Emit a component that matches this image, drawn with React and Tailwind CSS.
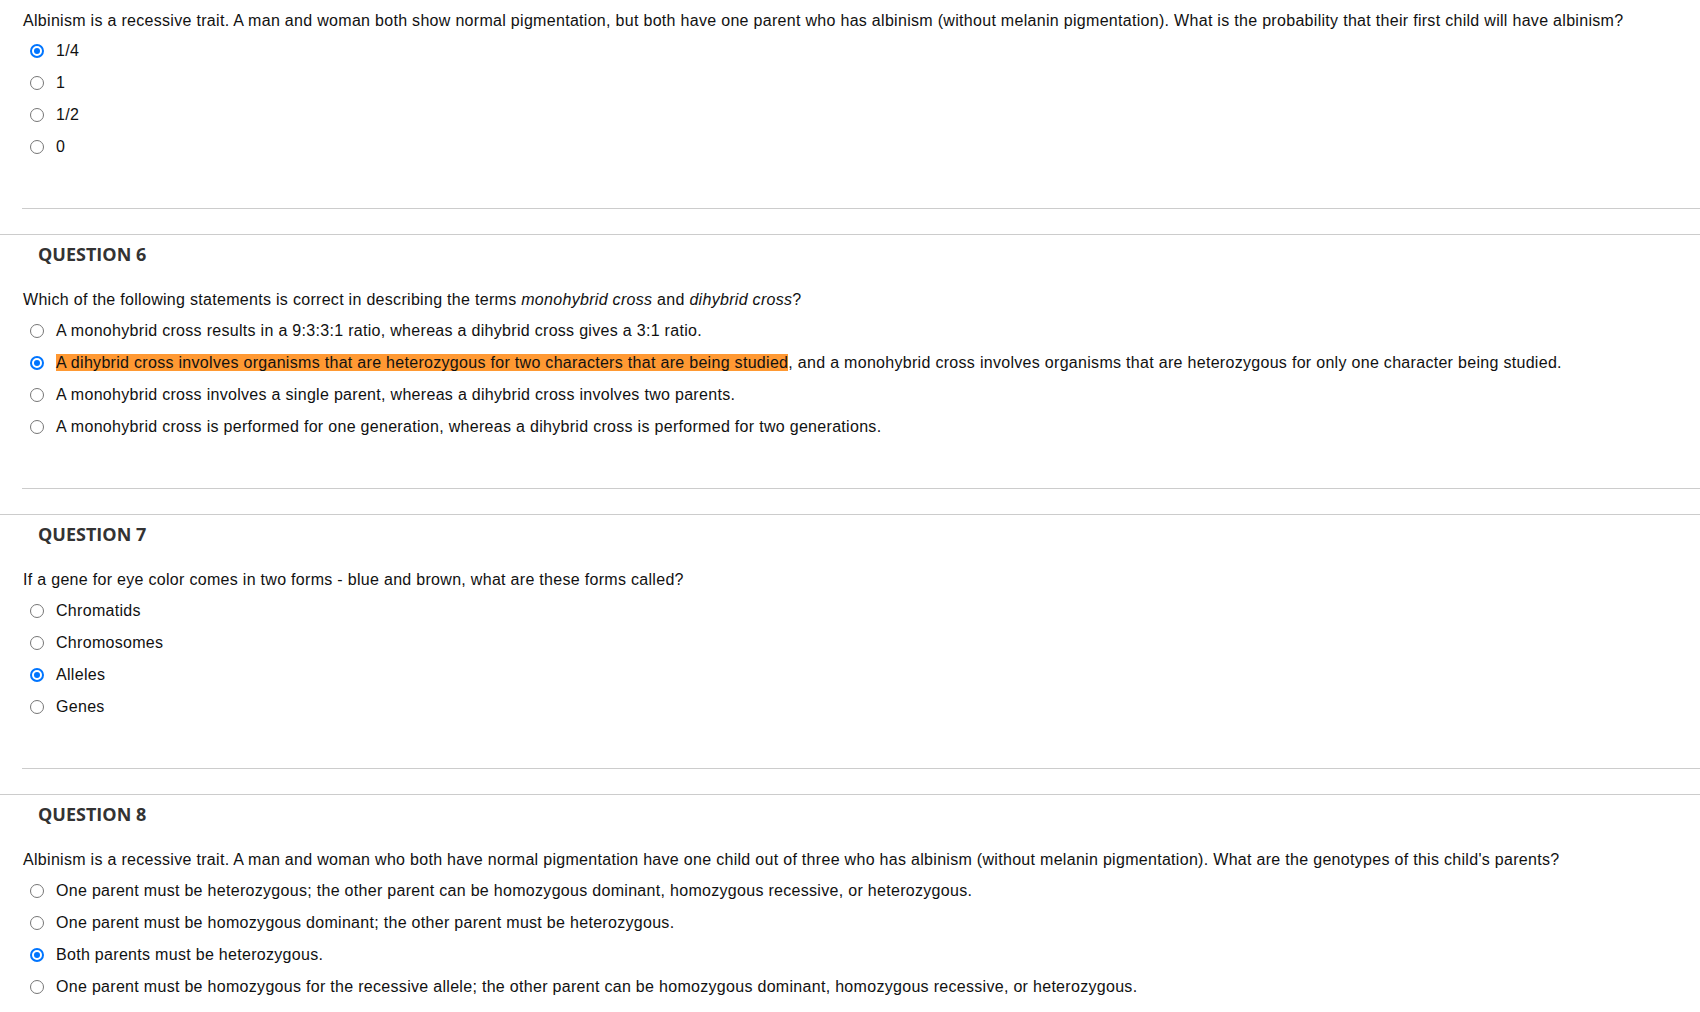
import React from 'react';

const questions = [
  {
    num: 6,
    text: (
      <>
        Which of the following statements is correct in describing the terms <i>monohybrid cross</i> and{' '}
        <i>dihybrid cross</i>?
      </>
    ),
    options: [
      'A monohybrid cross results in a 9:3:3:1 ratio, whereas a dihybrid cross gives a 3:1 ratio.',
      <>
        <span className="bg-[#ff9933]">
          A dihybrid cross involves organisms that are heterozygous for two characters that are being studied
        </span>
        , and a monohybrid cross involves organisms that are heterozygous for only one character being studied.
      </>,
      'A monohybrid cross involves a single parent, whereas a dihybrid cross involves two parents.',
      'A monohybrid cross is performed for one generation, whereas a dihybrid cross is performed for two generations.',
    ],
    answer: 1,
  },
  {
    num: 7,
    text: 'If a gene for eye color comes in two forms - blue and brown, what are these forms called?',
    options: ['Chromatids', 'Chromosomes', 'Alleles', 'Genes'],
    answer: 2,
  },
  {
    num: 8,
    text: "Albinism is a recessive trait. A man and woman who both have normal pigmentation have one child out of three who has albinism (without melanin pigmentation). What are the genotypes of this child's parents?",
    options: [
      'One parent must be heterozygous; the other parent can be homozygous dominant, homozygous recessive, or heterozygous.',
      'One parent must be homozygous dominant; the other parent must be heterozygous.',
      'Both parents must be heterozygous.',
      'One parent must be homozygous for the recessive allele; the other parent can be homozygous dominant, homozygous recessive, or heterozygous.',
    ],
    answer: 2,
  },
];

function Radio({ checked }) {
  if (checked) {
    return (
      <span className="w-[14px] h-[14px] shrink-0 rounded-full border-2 border-[#0075ff] bg-white flex items-center justify-center">
        <span className="w-[6px] h-[6px] rounded-full bg-[#0075ff]" />
      </span>
    );
  }
  return <span className="w-[14px] h-[14px] shrink-0 rounded-full border border-[#767676] bg-white" />;
}

function Options({ options, answer }) {
  return (
    <div className="flex flex-col">
      {options.map((opt, i) => (
        <div key={i} className="h-[32px] flex items-center pl-[7px]">
          <Radio checked={i === answer} />
          <span className="ml-[12px]">{opt}</span>
        </div>
      ))}
    </div>
  );
}

function App() {
  return (
    <div className="w-full min-h-screen bg-white text-[16px] leading-[24px] tracking-[0.3px] text-[#111] font-['Liberation_Sans',Arial,sans-serif]">
      <div className="pt-[9px] px-[23px]">
        <p>
          Albinism is a recessive trait. A man and woman both show normal pigmentation, but both have one parent who
          has albinism (without melanin pigmentation). What is the probability that their first child will have
          albinism?
        </p>
        <div className="mt-[2px]">
          <Options options={['1/4', '1', '1/2', '0']} answer={0} />
        </div>
      </div>
      <div className="mt-[45px] ml-[22px] border-t border-[#cccccc]" />

      {questions.map((q) => (
        <section key={q.num} className="mt-[25px] border-t border-[#cccccc]">
          <h3 className="mt-[7px] pl-[38px] font-['Open_Sans',sans-serif] font-bold text-[18px] leading-[24px] tracking-normal text-[#333]">
            QUESTION {q.num}
          </h3>
          <div className="mt-[22px] px-[23px]">
            <p>{q.text}</p>
            <div className="mt-[3px]">
              <Options options={q.options} answer={q.answer} />
            </div>
          </div>
          <div className="mt-[45px] ml-[22px] border-t border-[#cccccc]" />
        </section>
      ))}
    </div>
  );
}

export default App;
